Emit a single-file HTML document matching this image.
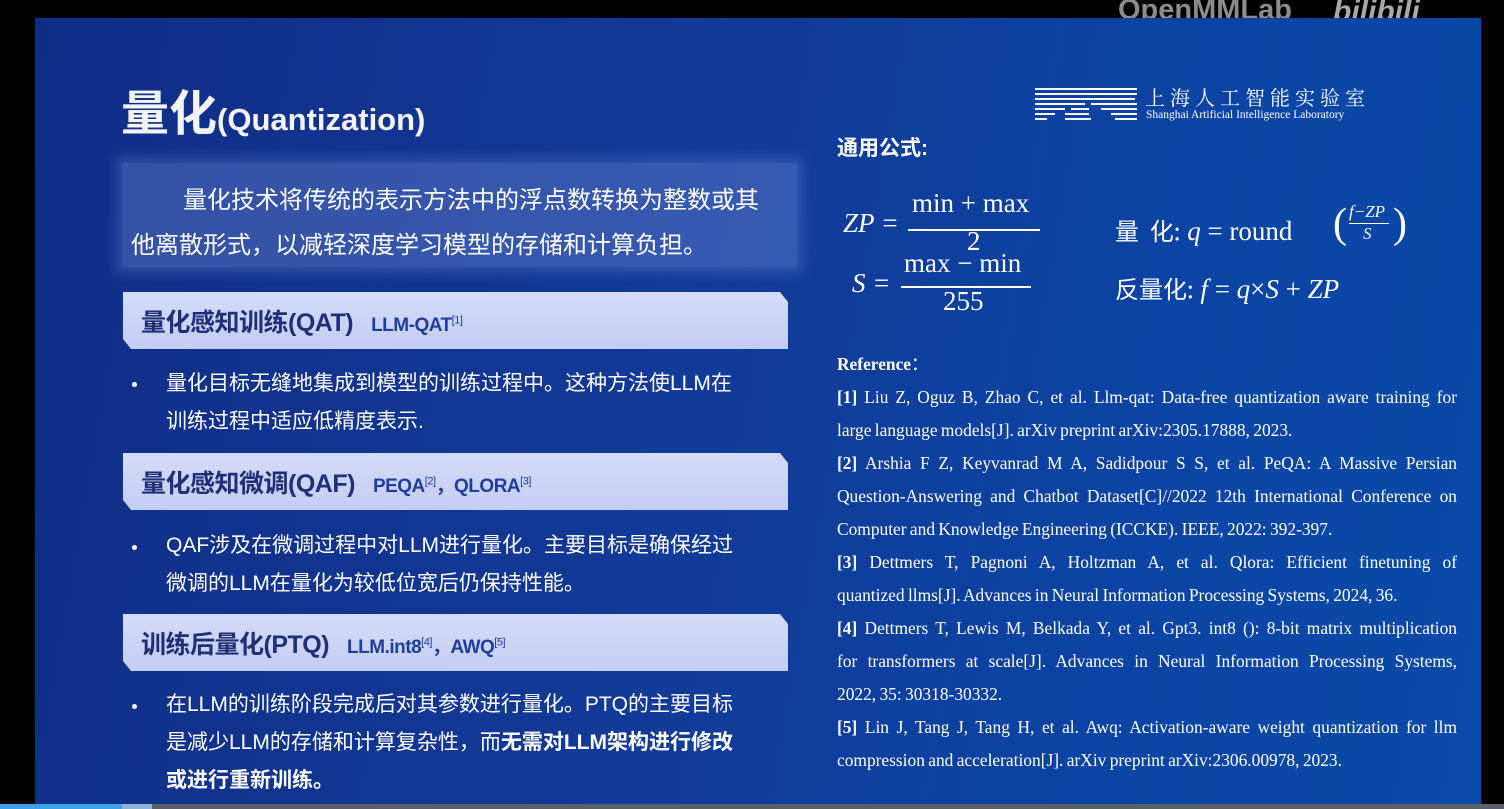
<!DOCTYPE html>
<html><head><meta charset="utf-8">
<style>
*{margin:0;padding:0;box-sizing:border-box}
body{width:1504px;height:809px;background:#000;position:relative;overflow:hidden;font-family:"Liberation Sans","Noto Sans CJK SC",sans-serif}
.slide{position:absolute;left:35px;top:18px;width:1446px;height:791px;background:linear-gradient(100deg,#102d86 0%,#123a98 45%,#0b44a4 75%,#0a4aa8 100%);overflow:hidden}
.a{position:absolute;white-space:nowrap}
.intro{position:absolute;left:87px;top:145px;width:675px;height:104px;background:rgba(120,150,220,.35);box-shadow:0 0 12px 6px rgba(120,150,220,.3)}
.bar{position:absolute;left:88px;width:665px;height:57px;background:linear-gradient(180deg,#d5dcf8,#c3cdf3);clip-path:polygon(0 0,calc(100% - 8px) 0,100% 10px,100% 100%,8px 100%,0 calc(100% - 10px))}
.bar .t{position:absolute;left:18px;top:11px;font-size:25px;font-weight:bold;color:#1f2f78;letter-spacing:-0.5px}
.bar .s{font-size:19px;color:#1f3da0;margin-left:18px}
.bar sup{font-size:11px;font-weight:normal}
.bl{position:absolute;left:131px;font-size:21px;color:#fff;line-height:38px;letter-spacing:0px}
.dot{position:absolute;left:97px;width:5px;height:5px;border-radius:50%;background:#fff}
.ref{position:absolute;left:802px;width:620px;font-family:"Liberation Serif",serif;font-size:17.4px;color:#fff;line-height:33px;word-spacing:-1px}
.ref div{text-align:justify;text-align-last:justify;white-space:nowrap;overflow:visible}
.ref div.l{text-align-last:left}
.m{font-family:"Liberation Serif",serif;color:#fff;font-size:27px}
.i{font-style:italic}
</style></head><body>
<div class="a" style="left:1118px;top:-6px;font-size:29px;font-weight:bold;color:#8c8c8c">OpenMMLab</div>
<div class="a" style="left:1333px;top:-5px;font-size:30px;font-weight:bold;color:#a9a9a9;font-style:italic">bilibili</div>
<div class="slide">
 <div class="a" style="left:86px;top:56px;font-size:48px;font-weight:bold;color:#f4f4f8">量化<span style="font-size:31px">(Quantization)</span></div>
 <svg class="a" style="left:1000px;top:68px" width="104" height="36" viewBox="0 0 104 36">
  <g fill="#fff">
   <rect x="0" y="2" width="102" height="2"/><rect x="0" y="7" width="102" height="2"/><rect x="0" y="12" width="100" height="2"/>
   <rect x="0" y="17" width="50" height="2"/><rect x="56" y="17" width="46" height="2"/>
   <rect x="0" y="22" width="30" height="2"/><rect x="36" y="22" width="18" height="2"/><rect x="66" y="22" width="36" height="2"/>
   <rect x="0" y="27" width="20" height="2"/><rect x="30" y="27" width="24" height="2"/><rect x="76" y="27" width="26" height="2"/>
   <rect x="0" y="32" width="12" height="2"/><rect x="30" y="32" width="26" height="2"/><rect x="80" y="32" width="22" height="2"/>
  </g></svg>
 <div class="a" style="left:1110px;top:64px;font-size:20px;color:#fff;letter-spacing:5px;font-family:'Noto Serif CJK SC',serif">上海人工智能实验室</div>
 <div class="a" style="left:1111px;top:91px;font-size:11.5px;color:#fff;font-family:'Liberation Serif',serif">Shanghai Artificial Intelligence Laboratory</div>

 <div class="intro"></div>
 <div class="a" style="left:148px;top:162px;font-size:24px;color:#fff">量化技术将传统的表示方法中的浮点数转换为整数或其</div>
 <div class="a" style="left:96px;top:207px;font-size:24px;color:#fff">他离散形式，以减轻深度学习模型的存储和计算负担。</div>

 <div class="bar" style="top:274px"><div class="t">量化感知训练(QAT)<span class="s">LLM-QAT<sup>[1]</sup></span></div></div>
 <div class="dot" style="top:364px"></div>
 <div class="bl" style="top:347px">量化目标无缝地集成到模型的训练过程中。这种方法使LLM在<br>训练过程中适应低精度表示.</div>

 <div class="bar" style="top:435px"><div class="t">量化感知微调(QAF)<span class="s">PEQA<sup>[2]</sup>，QLORA<sup>[3]</sup></span></div></div>
 <div class="dot" style="top:527px"></div>
 <div class="bl" style="top:509px">QAF涉及在微调过程中对LLM进行量化。主要目标是确保经过<br>微调的LLM在量化为较低位宽后仍保持性能。</div>

 <div class="bar" style="top:596px"><div class="t">训练后量化(PTQ)<span class="s">LLM.int8<sup>[4]</sup>，AWQ<sup>[5]</sup></span></div></div>
 <div class="dot" style="top:686px"></div>
 <div class="bl" style="top:668px">在LLM的训练阶段完成后对其参数进行量化。PTQ的主要目标<br>是减少LLM的存储和计算复杂性，而<b>无需对LLM架构进行修改</b><br><b>或进行重新训练。</b></div>

 <div class="a" style="left:802px;top:114px;font-size:21px;font-weight:bold;color:#fff">通用公式:</div>
 <div class="a m i" style="left:808px;top:190px">ZP =</div>
 <div class="a m" style="left:877px;top:170px">min + max</div>
 <div class="a" style="left:873px;top:211px;width:132px;height:2px;background:#fff"></div>
 <div class="a m" style="left:932px;top:208px">2</div>
 <div class="a m i" style="left:817px;top:250px">S =</div>
 <div class="a m" style="left:869px;top:230px">max − min</div>
 <div class="a" style="left:866px;top:268px;width:130px;height:2px;background:#fff"></div>
 <div class="a m" style="left:908px;top:268px">255</div>
 <div class="a m" style="left:1080px;top:194px"><span style="font-family:'Noto Sans CJK SC',sans-serif;font-size:24px">量&nbsp;&nbsp;化:</span> <span class="i">q</span> = round</div>
 <div class="a m" style="left:1298px;top:182px;font-size:42px">(</div>
 <div class="a m i" style="left:1314px;top:184px;font-size:17px">f−ZP</div>
 <div class="a" style="left:1314px;top:205px;width:40px;height:1px;background:#fff"></div>
 <div class="a m i" style="left:1328px;top:206px;font-size:17px">S</div>
 <div class="a m" style="left:1358px;top:182px;font-size:42px">)</div>
 <div class="a m" style="left:1080px;top:252px"><span style="font-family:'Noto Sans CJK SC',sans-serif;font-size:24px">反量化:</span> <span class="i">f</span> = <span class="i">q</span>×<span class="i">S</span> + <span class="i">ZP</span></div>

 <div class="ref" style="top:330px">
  <div class="l"><b>Reference</b>：</div>
  <div><b>[1]</b> Liu Z, Oguz B, Zhao C, et al. Llm-qat: Data-free quantization aware training for</div>
  <div class="l">large language models[J]. arXiv preprint arXiv:2305.17888, 2023.</div>
  <div><b>[2]</b> Arshia F Z, Keyvanrad M A, Sadidpour S S, et al. PeQA: A Massive Persian</div>
  <div>Question-Answering and Chatbot Dataset[C]//2022 12th International Conference on</div>
  <div class="l">Computer and Knowledge Engineering (ICCKE). IEEE, 2022: 392-397.</div>
  <div><b>[3]</b> Dettmers T, Pagnoni A, Holtzman A, et al. Qlora: Efficient finetuning of</div>
  <div class="l">quantized llms[J]. Advances in Neural Information Processing Systems, 2024, 36.</div>
  <div><b>[4]</b> Dettmers T, Lewis M, Belkada Y, et al. Gpt3. int8 (): 8-bit matrix multiplication</div>
  <div>for transformers at scale[J]. Advances in Neural Information Processing Systems,</div>
  <div class="l">2022, 35: 30318-30332.</div>
  <div><b>[5]</b> Lin J, Tang J, Tang H, et al. Awq: Activation-aware weight quantization for llm</div>
  <div class="l">compression and acceleration[J]. arXiv preprint arXiv:2306.00978, 2023.</div>
 </div>
</div>
<div class="a" style="left:0;top:804px;width:1504px;height:5px;background:#5a5f6a"></div>
<div class="a" style="left:0;top:804px;width:152px;height:5px;background:#8fb0d8"></div>
<div class="a" style="left:0;top:804px;width:122px;height:5px;background:#3fa0e8"></div>
</body></html>
